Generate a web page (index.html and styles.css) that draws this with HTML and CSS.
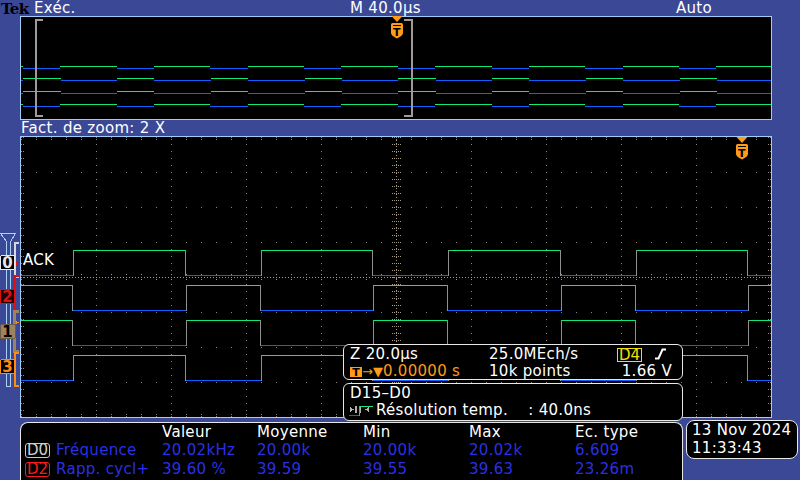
FILE: index.html
```html
<!DOCTYPE html>
<html lang="fr">
<head>
<meta charset="utf-8">
<title>Tek</title>
<link rel="stylesheet" href="styles.css">
</head>
<body>
<div class="topbar">
  <span class="tek">Tek</span>
  <span class="run">Exéc.</span>
  <span class="timebase">M 40.0µs</span>
  <span class="mode">Auto</span>
</div>

<div class="overview">
  <svg class="ovsvg" width="750" height="102" viewBox="21 17 750 102" shape-rendering="crispEdges">
    <g fill="none" stroke-width="1">
      <path stroke="#10e878" d="M21 66.5H23M60 66.5H117M154 66.5H210M248 66.5H304M341 66.5H398M435 66.5H492M529 66.5H585M623 66.5H679M716 66.5H771"/>
      <path stroke="#1060ff" d="M23 68.5H60M117 68.5H154M210 68.5H248M304 68.5H341M398 68.5H435M492 68.5H529M585 68.5H623M679 68.5H716"/>
      <path stroke="#10e878" d="M23 78.5H61M117 78.5H154M211 78.5H248M305 78.5H342M398 78.5H436M492 78.5H529M586 78.5H623M680 78.5H717"/>
      <path stroke="#1060ff" d="M21 80.5H23M61 80.5H117M154 80.5H211M248 80.5H305M342 80.5H398M436 80.5H492M529 80.5H586M623 80.5H680M717 80.5H771"/>
      <path stroke="#10e878" d="M23 91.5H61M117 91.5H154M211 91.5H248M305 91.5H342M398 91.5H436M492 91.5H529M586 91.5H623M680 91.5H717"/>
      <path stroke="#1060ff" d="M21 93.5H23M61 93.5H117M154 93.5H211M248 93.5H305M342 93.5H398M436 93.5H492M529 93.5H586M623 93.5H680M717 93.5H771"/>
      <path stroke="#10e878" d="M21 104.5H23M60 104.5H117M154 104.5H210M248 104.5H304M341 104.5H398M435 104.5H492M529 104.5H585M623 104.5H679M716 104.5H771"/>
      <path stroke="#1060ff" d="M23 106.5H60M117 106.5H154M210 106.5H248M304 106.5H341M398 106.5H435M492 106.5H529M585 106.5H623M679 106.5H716"/>
      <path stroke="#a09a9a" stroke-width="2" d="M43 20H36V116H43M404 20H412V116H404"/>
    </g>
  </svg>
  <svg class="tmark tmark-ov" width="14" height="23" viewBox="0 0 14 23">
    <path d="M1.5 0H12.5L7 6Z" fill="#ff9a1a"/>
    <path d="M1 8.5Q1 7 2.5 7H11.5Q13 7 13 8.5V17Q13 19.5 7 22.5Q1 19.5 1 17Z" fill="#ff9a1a"/>
    <rect x="3" y="9" width="8" height="1" fill="#000"/>
    <text x="7" y="20" text-anchor="middle" font-family="DejaVu Sans" font-weight="bold" font-size="11" fill="#000">T</text>
  </svg>
</div>

<div class="zoombar">Fact. de zoom: 2 X</div>

<div class="mainrow">
  <div class="strip">
    <svg width="20" height="282" viewBox="0 136 20 282" shape-rendering="crispEdges">
      <path d="M0.5 233.5H15.5L10.5 241.5V386.5H6.5V241.5Z" fill="#3a4896" stroke="#a8d0f8"/>
      <path d="M19 243H15V277H19" stroke="#d8d8d8" stroke-width="2" fill="none"/>
      <path d="M19 276H15V310H19" stroke="#e01010" stroke-width="2" fill="none"/>
      <path d="M19 311H14.5V351H19" stroke="#9c8462" stroke-width="3" fill="none"/>
      <path d="M19 353H15V386H19" stroke="#ff8a10" stroke-width="2" fill="none"/>
      <path d="M16 262L19 263.5L16 265Z" fill="#e01010"/>
      <path d="M16 321L19 322.5L16 324Z" fill="#ff8a10"/>
      <rect x="0.5" y="255.5" width="14" height="14" rx="1.5" fill="#000" stroke="#e8e8e8"/>
      <text x="7.5" y="268" text-anchor="middle" font-family="DejaVu Sans" font-weight="bold" font-size="15" fill="#e8e8e8">0</text>
      <rect x="0.5" y="289.5" width="14" height="14" rx="1.5" fill="#1a0000" stroke="#e01010"/>
      <text x="7.5" y="302" text-anchor="middle" font-family="DejaVu Sans" font-weight="bold" font-size="15" fill="#e01010">2</text>
      <rect x="0.5" y="324.5" width="15" height="14" rx="1.5" fill="#9c8462" stroke="#6e5c42"/>
      <text x="7.5" y="337" text-anchor="middle" font-family="DejaVu Sans" font-weight="bold" font-size="15" fill="#000">1</text>
      <rect x="0.5" y="359.5" width="14" height="14" rx="1.5" fill="#000" stroke="#ff8a10"/>
      <text x="7.5" y="372" text-anchor="middle" font-family="DejaVu Sans" font-weight="bold" font-size="15" fill="#ff8a10">3</text>
    </svg>
  </div>

  <div class="scope">
    <svg class="grid" width="750" height="280" viewBox="21 137 750 280" shape-rendering="crispEdges">
      <defs>
        <pattern id="hd" patternUnits="userSpaceOnUse" x="21" y="137" width="15" height="35"><rect width="1" height="1" fill="#8f8676"/></pattern>
        <pattern id="vd" patternUnits="userSpaceOnUse" x="21" y="137" width="75" height="7"><rect width="1" height="1" fill="#8f8676"/></pattern>
        <pattern id="tt" patternUnits="userSpaceOnUse" x="21" y="137" width="15" height="3"><rect width="1" height="1" fill="#8f8676"/><rect y="2" width="1" height="1" fill="#8f8676"/></pattern>
        <pattern id="bt" patternUnits="userSpaceOnUse" x="21" y="414" width="15" height="3"><rect width="1" height="1" fill="#8f8676"/><rect y="2" width="1" height="1" fill="#8f8676"/></pattern>
        <pattern id="lt" patternUnits="userSpaceOnUse" x="21" y="137" width="3" height="7"><rect width="1" height="1" fill="#8f8676"/><rect x="2" width="1" height="1" fill="#8f8676"/></pattern>
        <pattern id="rt" patternUnits="userSpaceOnUse" x="768" y="137" width="3" height="7"><rect width="1" height="1" fill="#8f8676"/><rect x="2" width="1" height="1" fill="#8f8676"/></pattern>
        <pattern id="ht" patternUnits="userSpaceOnUse" x="21" y="274" width="15" height="7"><rect width="1" height="1" fill="#a89a7c"/><rect y="5" width="1" height="1" fill="#a89a7c"/></pattern>
        <pattern id="vt" patternUnits="userSpaceOnUse" x="392" y="137" width="10" height="7"><rect width="1" height="1" fill="#a89a7c"/><rect x="2" width="1" height="1" fill="#a89a7c"/><rect x="6" width="1" height="1" fill="#a89a7c"/><rect x="8" width="1" height="1" fill="#a89a7c"/></pattern>
      </defs>
      <rect x="21" y="172" width="750" height="211" fill="url(#hd)"/>
      <rect x="96" y="137" width="601" height="280" fill="url(#vd)"/>
      <rect x="21" y="137" width="750" height="3" fill="url(#tt)"/>
      <rect x="21" y="414" width="750" height="3" fill="url(#bt)"/>
      <rect x="21" y="137" width="3" height="280" fill="url(#lt)"/>
      <rect x="768" y="137" width="3" height="280" fill="url(#rt)"/>
      <rect x="21" y="274" width="750" height="7" fill="url(#ht)"/>
      <rect x="392" y="137" width="10" height="280" fill="url(#vt)"/>
      <path d="M21 277.5H771M396.5 137V417" stroke="#a89a7c" stroke-dasharray="1 2" fill="none"/>
      <g fill="none">
        <path stroke="#10e878" d="M73 250.5H185M261 250.5H372M448 250.5H560M636 250.5H747"/>
        <path stroke="#1060ff" d="M21 275.5H73M185 275.5H261M372 275.5H448M560 275.5H636M747 275.5H771"/>
        <path stroke="#10e878" d="M21 285.5H72M186 285.5H260M373 285.5H447M561 285.5H635M748 285.5H771"/>
        <path stroke="#1060ff" d="M72 310.5H186M260 310.5H373M447 310.5H561M635 310.5H748"/>
        <path stroke="#10e878" d="M21 320.5H72M186 320.5H260M373 320.5H447M561 320.5H635M748 320.5H771"/>
        <path stroke="#1060ff" d="M72 345.5H186M260 345.5H373M447 345.5H561M635 345.5H748"/>
        <path stroke="#10e878" d="M73 355.5H185M261 355.5H372M448 355.5H560M636 355.5H747"/>
        <path stroke="#1060ff" d="M21 380.5H73M185 380.5H261M372 380.5H448M560 380.5H636M747 380.5H771"/>
        <path stroke="#909090" d="M73.5 250V276M185.5 250V276M261.5 250V276M372.5 250V276M448.5 250V276M560.5 250V276M636.5 250V276M747.5 250V276
          M72.5 285V311M186.5 285V311M260.5 285V311M373.5 285V311M447.5 285V311M561.5 285V311M635.5 285V311M748.5 285V311
          M72.5 320V346M186.5 320V346M260.5 320V346M373.5 320V346M447.5 320V346M561.5 320V346M635.5 320V346M748.5 320V346
          M73.5 355V381M185.5 355V381M261.5 355V381M372.5 355V381M448.5 355V381M560.5 355V381M636.5 355V381M747.5 355V381"/>
      </g>
    </svg>

    <div class="ack">ACK</div>

    <svg class="tmark tmark-main" width="14" height="23" viewBox="0 0 14 23">
      <path d="M1.5 0H12.5L7 6Z" fill="#ff9a1a"/>
      <path d="M1 8.5Q1 7 2.5 7H11.5Q13 7 13 8.5V17Q13 19.5 7 22.5Q1 19.5 1 17Z" fill="#ff9a1a"/>
      <rect x="3" y="9" width="8" height="1" fill="#000"/>
      <text x="7" y="20" text-anchor="middle" font-family="DejaVu Sans" font-weight="bold" font-size="11" fill="#000">T</text>
    </svg>

    <div class="info info1">
      <span>Z 20.0µs</span>
      <span>25.0MEch/s</span>
      <span class="trig"><span class="d4">D4</span><svg class="edge" width="17" height="12" viewBox="0 0 17 12"><path d="M0 10.5H3.5L7.5 1.5H11" stroke="#fff" stroke-width="2" fill="none"/></svg></span>
      <span class="orange"><span class="tbox">T</span><span class="arr">→</span><span class="arr">▼</span>0.00000 s</span>
      <span>10k points</span>
      <span class="right">1.66 V</span>
    </div>

    <div class="info info2">
      <div>D15–D0</div>
      <div class="resline"><svg class="resicon" width="25" height="12" viewBox="0 0 25 12" shape-rendering="crispEdges"><path d="M1 2L5 4.5L1 7Z" fill="#b0b0b0"/><rect x="6" y="1" width="2" height="7" fill="#b0b0b0"/><path d="M16 4.5L20 2V7Z" fill="#b0b0b0"/><rect x="11" y="1" width="1" height="7" fill="#b0b0b0"/><path d="M0 10.5H10" stroke="#1060ff"/><path d="M10 1.5H24" stroke="#10e878"/><path d="M10.5 1V11" stroke="#909090"/></svg>Résolution temp.&nbsp;&nbsp;&nbsp; : 40.0ns</div>
    </div>
  </div>
</div>

<div class="bottom">
  <div class="meas">
    <div></div><div>Valeur</div><div>Moyenne</div><div>Min</div><div>Max</div><div>Ec. type</div>
    <div class="lbl"><span class="chip c0">D0</span><span class="blue">Fréquence</span></div>
    <div class="blue">20.02kHz</div><div class="blue">20.00k</div><div class="blue">20.00k</div><div class="blue">20.02k</div><div class="blue">6.609</div>
    <div class="lbl"><span class="chip c2">D2</span><span class="blue">Rapp. cycl+</span></div>
    <div class="blue">39.60 %</div><div class="blue">39.59</div><div class="blue">39.55</div><div class="blue">39.63</div><div class="blue">23.26m</div>
  </div>
  <div class="datebox">
    <div>13 Nov 2024</div>
    <div>11:33:43</div>
  </div>
</div>
</body>
</html>
```

FILE: styles.css
```css
* { box-sizing: border-box; }
html, body { margin: 0; padding: 0; }
body {
  width: 800px;
  height: 480px;
  overflow: hidden;
  background: #3a4896;
  font-family: "DejaVu Sans", "Noto Sans", sans-serif;
  font-size: 15px;
  color: #fff;
  letter-spacing: 0.3px;
}
svg { display: block; }

.topbar {
  display: flex;
  height: 16px;
  line-height: 16px;
  white-space: nowrap;
}
.tek {
  display: block;
  width: 34px;
  height: 16px;
  padding: 2px 0 0 1px;
  font-family: "DejaVu Serif", serif;
  font-weight: bold;
  font-size: 15px;
  line-height: 14px;
  letter-spacing: -0.6px;
  color: #000;
}
.run { width: 316px; }
.timebase { width: 326px; }

.overview {
  position: relative;
  margin-left: 20px;
  width: 752px;
  height: 104px;
  border: 1px solid #a0ccf8;
  background: #000;
}
.tmark { position: absolute; }
.tmark-ov { left: 369px; top: -1px; }

.zoombar {
  height: 16px;
  line-height: 16px;
  padding-left: 21px;
  white-space: nowrap;
}

.mainrow { display: flex; height: 282px; }
.strip { width: 20px; }
.scope {
  position: relative;
  width: 752px;
  height: 282px;
  border: 1px solid #a0ccf8;
  background: #000;
}
.ack {
  position: absolute;
  left: 2px;
  top: 115px;
  line-height: 17px;
}
.tmark-main { left: 714px; top: 0; }

.info {
  position: absolute;
  left: 322px;
  width: 340px;
  background: #000;
  border: 1px solid #e8e8e8;
  border-radius: 6px;
  line-height: 17px;
  white-space: nowrap;
}
.info1 {
  top: 207px;
  height: 36px;
  padding: 1px 10px 0 6px;
  display: grid;
  grid-template-columns: 139px 1fr auto;
}
.info2 {
  top: 246px;
  height: 38px;
  padding: 1px 10px 0 6px;
}
.trig {
  display: flex;
  align-items: center;
  justify-content: flex-end;
  gap: 13px;
}
.d4 {
  display: inline-block;
  height: 14px;
  line-height: 12px;
  padding: 0 1px;
  border: 1.5px solid #f0e000;
  color: #f0e000;
  letter-spacing: 0;
}
.edge { margin-top: -1px; }
.right { text-align: right; }
.orange { color: #ff9a1a; display: flex; align-items: center; }
.tbox {
  display: inline-block;
  width: 12px;
  height: 10px;
  line-height: 11px;
  background: #ff9a1a;
  color: #000;
  font-size: 11px;
  font-weight: bold;
  text-align: center;
  letter-spacing: 0;
}
.arr { font-size: 13px; letter-spacing: 0; }
.resline { display: flex; align-items: center; }
.resicon { margin: 0 2px 0 -1px; }

.bottom { display: flex; height: 62px; }
.meas {
  margin: 4px 0 0 20px;
  width: 663px;
  height: 58px;
  border: 1px solid #e8e8e8;
  border-bottom: none;
  border-radius: 8px 8px 0 0;
  background: #000;
  padding: 0 0 0 4px;
  display: grid;
  grid-template-columns: 137px 95px 106px 106px 106px auto;
  align-content: start;
  line-height: 18.3px;
  white-space: nowrap;
}
.lbl { display: flex; align-items: flex-start; }
.blue { color: #2a30e6; }
.chip {
  display: inline-block;
  width: 25px;
  height: 15px;
  margin: 2px 6px 0 0;
  border: 1px solid;
  border-radius: 3px;
  line-height: 13px;
  text-align: center;
  letter-spacing: 0;
}
.c0 { color: #d0d0d0; border-color: #c8c8c8; }
.c2 { color: #ff1818; border-color: #ff1818; }

.datebox {
  margin: 2px 0 0 3px;
  width: 112px;
  height: 39px;
  border: 1px solid #e8e8e8;
  border-radius: 8px;
  background: #000;
  padding: 1px 0 0 5px;
  line-height: 17.5px;
  white-space: nowrap;
}
```
